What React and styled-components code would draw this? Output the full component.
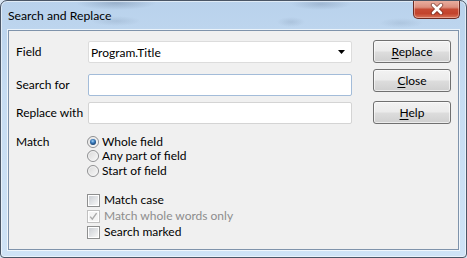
import React from "react";
import styled, { createGlobalStyle } from "styled-components";

const Global = createGlobalStyle`
  html, body { margin: 0; padding: 0; background: #d9e6f3; }
  body { width: 467px; height: 258px; overflow: hidden; }
  * { box-sizing: border-box; }
`;

const FONT = `Lato, "Open Sans", "Liberation Sans", sans-serif`;

const Window = styled.div`
  width: 467px;
  height: 258px;
  display: flex;
  flex-direction: column;
  border: 1px solid #4a5666;
  border-radius: 7px 7px 4px 4px;
  box-shadow: inset 0 0 0 1px rgba(255, 255, 255, 0.55);
  background:
    radial-gradient(ellipse 40px 7px at 115px 2px, rgba(70, 90, 120, 0.28), transparent),
    radial-gradient(ellipse 30px 6px at 320px 3px, rgba(70, 90, 120, 0.22), transparent),
    radial-gradient(ellipse 25px 5px at 115px 20px, rgba(70, 90, 120, 0.14), transparent),
    radial-gradient(ellipse 14px 5px at 290px 21px, rgba(70, 90, 120, 0.14), transparent),
    radial-gradient(ellipse 22px 5px at 400px 22px, rgba(70, 90, 120, 0.12), transparent),
    linear-gradient(180deg, #b9d2ec 0%, #c6dcf2 35%, #cfe3f6 100%);
  font-family: ${FONT};
  font-size: 12px;
  color: #000;
  overflow: hidden;
`;

const TitleBar = styled.div`
  height: 29px;
  flex: none;
  display: flex;
  align-items: flex-start;
`;

const Title = styled.div`
  padding: 7px 0 0 7px;
  font-size: 12.2px;
  line-height: 16px;
  color: #000;
`;

const CloseButton = styled.div`
  margin: -1px 6px 0 auto;
  width: 47px;
  height: 19px;
  border: 1px solid #6b2a22;
  border-top: none;
  border-radius: 0 0 5px 5px;
  background: linear-gradient(180deg, #ebb2a4 0%, #dc8f7e 40%, #c64a34 52%, #c3432c 75%, #d7745a 100%);
  box-shadow: inset 0 0 0 1px rgba(255, 220, 210, 0.45);
  display: flex;
  align-items: center;
  justify-content: center;
`;

const Client = styled.div`
  flex: 1;
  margin: 0 7px 7px 7px;
  border: 1px solid #7f93ab;
  box-shadow: 0 0 0 1px rgba(255, 255, 255, 0.7);
  background: #f0f0f0;
  display: flex;
  padding: 9px 7px 0 7px;
`;

const Form = styled.div`
  width: 336px;
  display: flex;
  flex-direction: column;
  padding-top: 1px;
`;

const Row = styled.div`
  display: grid;
  grid-template-columns: 72px 264px;
  align-items: ${(p) => (p.$top ? "start" : "center")};
  margin-top: ${(p) => p.$mt || 0}px;
`;

const Label = styled.div`
  line-height: ${(p) => p.$lh || 16}px;
  white-space: nowrap;
`;

const Combo = styled.div`
  height: 22px;
  background: #fff;
  border: 1px solid #dcdcdc;
  border-radius: 2px;
  display: flex;
  align-items: center;
  padding: 0 6px 0 2px;
`;

const ComboText = styled.span`
  flex: 1;
`;

const Input = styled.div`
  height: 22px;
  background: #fff;
  border: 1px solid ${(p) => (p.$focus ? "#a3bcd9" : "#d4d4d4")};
  border-radius: 2px;
`;

const Options = styled.div`
  display: flex;
  flex-direction: column;
`;

const Option = styled.div`
  display: flex;
  align-items: center;
  height: ${(p) => p.$h}px;
  line-height: ${(p) => Math.floor(p.$h)}px;
  gap: ${(p) => p.$gap}px;
  margin-left: -1px;
  color: ${(p) => (p.$disabled ? "#8d8d8d" : "#000")};
  white-space: nowrap;
`;

const Checks = styled.div`
  display: flex;
  flex-direction: column;
  margin-top: 14px;
`;

const Buttons = styled.div`
  margin-left: 21px;
  width: 78px;
  display: flex;
  flex-direction: column;
`;

const Button = styled.div`
  height: 23px;
  margin-top: ${(p) => p.$mt || 0}px;
  border: 1px solid #707070;
  border-radius: 3px;
  background: linear-gradient(180deg, #f2f2f2 0%, #ebebeb 48%, #dddddd 52%, #cfcfcf 100%);
  box-shadow: inset 0 0 0 1px rgba(255, 255, 255, 0.6);
  display: flex;
  align-items: center;
  justify-content: center;
  line-height: 16px;
`;

const Key = styled.span`
  text-decoration: underline;
  text-underline-offset: 2px;
`;

function CloseGlyph() {
  return (
    <svg width="14" height="12" viewBox="0 0 14 12">
      <path d="M3 2 L11 10 M11 2 L3 10" stroke="#5a2018" strokeWidth="4.4" strokeLinecap="round" opacity="0.6" />
      <path d="M3 2 L11 10 M11 2 L3 10" stroke="#ffffff" strokeWidth="2.6" strokeLinecap="round" />
    </svg>
  );
}

function Arrow() {
  return (
    <svg width="7" height="4" viewBox="0 0 7 4">
      <path d="M0 0 H7 L3.5 4 Z" fill="#000" />
    </svg>
  );
}

function Radio({ checked }) {
  return (
    <svg width="12" height="12" viewBox="0 0 12 12">
      <defs>
        <linearGradient id="rbg" x1="0" y1="0" x2="1" y2="1">
          <stop offset="0" stopColor="#d6d6d6" />
          <stop offset="1" stopColor="#fbfbfb" />
        </linearGradient>
        <radialGradient id="rdot" cx="0.45" cy="0.35" r="0.65">
          <stop offset="0" stopColor="#a8d6f8" />
          <stop offset="0.45" stopColor="#3d7fc0" />
          <stop offset="1" stopColor="#153e6c" />
        </radialGradient>
      </defs>
      <circle cx="6" cy="6" r="5.5" fill="url(#rbg)" stroke="#8f9092" strokeWidth="1" />
      <circle cx="6" cy="6" r="4.3" fill="none" stroke="#f4f4f4" strokeWidth="0.8" />
      {checked && <circle cx="6" cy="6" r="3" fill="url(#rdot)" />}
    </svg>
  );
}

function Check({ checked, disabled }) {
  return (
    <svg width="13" height="13" viewBox="0 0 13 13">
      <defs>
        <linearGradient id="cbg" x1="0" y1="0" x2="1" y2="1">
          <stop offset="0" stopColor="#cbcfd4" />
          <stop offset="1" stopColor="#f7f7f7" />
        </linearGradient>
      </defs>
      <rect x="0.5" y="0.5" width="12" height="12" fill="#fff" stroke={disabled ? "#c0c0c0" : "#8e8f8f"} />
      <rect x="2" y="2" width="9" height="9" fill={disabled ? "#f4f4f4" : "url(#cbg)"} />
      {checked && (
        <path d="M3.2 6.6 L5.3 9.2 L9.6 3.2" fill="none" stroke={disabled ? "#a9a9a9" : "#333"} strokeWidth="1.4" />
      )}
    </svg>
  );
}

export default function App() {
  return (
    <>
      <Global />
      <Window>
        <TitleBar>
          <Title>Search and Replace</Title>
          <CloseButton>
            <CloseGlyph />
          </CloseButton>
        </TitleBar>
        <Client>
          <Form>
            <Row>
              <Label>Field</Label>
              <Combo>
                <ComboText>Program.Title</ComboText>
                <Arrow />
              </Combo>
            </Row>
            <Row $mt={11}>
              <Label>Search for</Label>
              <Input $focus />
            </Row>
            <Row $mt={6}>
              <Label>Replace with</Label>
              <Input />
            </Row>
            <Row $mt={10} $top>
              <Label $lh={15}>Match</Label>
              <div>
                <Options>
                  <Option $h={15} $gap={3}>
                    <Radio checked />
                    Whole field
                  </Option>
                  <Option $h={14.5} $gap={3}>
                    <Radio />
                    Any part of field
                  </Option>
                  <Option $h={14.5} $gap={3}>
                    <Radio />
                    Start of field
                  </Option>
                </Options>
                <Checks>
                  <Option $h={16} $gap={4}>
                    <Check />
                    Match case
                  </Option>
                  <Option $h={16} $gap={4} $disabled>
                    <Check checked disabled />
                    Match whole words only
                  </Option>
                  <Option $h={16} $gap={4}>
                    <Check />
                    Search marked
                  </Option>
                </Checks>
              </div>
            </Row>
          </Form>
          <Buttons>
            <Button>
              <span><Key>R</Key>eplace</span>
            </Button>
            <Button $mt={6}>
              <span><Key>C</Key>lose</span>
            </Button>
            <Button $mt={9}>
              <span><Key>H</Key>elp</span>
            </Button>
          </Buttons>
        </Client>
      </Window>
    </>
  );
}
